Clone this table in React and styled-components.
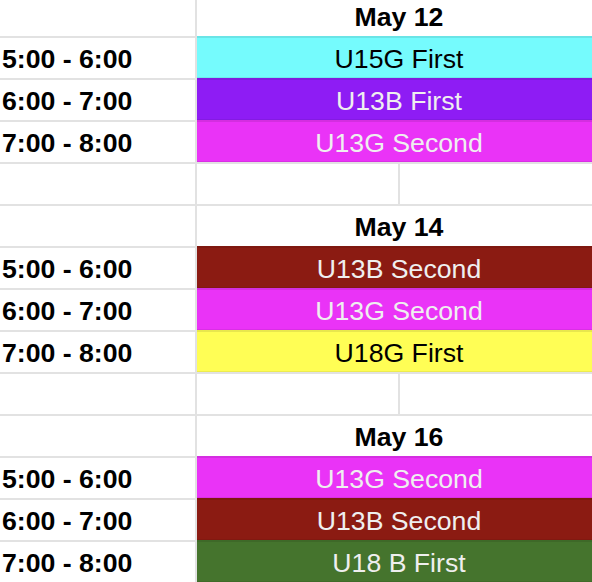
import React from "react";
import styled, { createGlobalStyle } from "styled-components";

const Global = createGlobalStyle`
  html, body { margin: 0; padding: 0; background: #fff; overflow: hidden; }
  body { font-family: "Liberation Sans", Arial, sans-serif; }
`;

const LINE = "#e2e2e2";

const Sheet = styled.div`
  width: 601px;
  display: flex;
  flex-direction: column;
`;

const Row = styled.div`
  display: grid;
  grid-template-columns: 197px 203px 1fr;
  height: ${(p) => (p.$first ? "36px" : "42px")};
  font-size: 26.67px;
  line-height: normal;
`;

const Cell = styled.div`
  box-sizing: border-box;
  display: flex;
  align-items: flex-end;
  padding-bottom: 3px;
  border-top: ${(p) => (p.$first ? "none" : `2px solid ${LINE}`)};
  min-width: 0;
  white-space: nowrap;
  overflow: hidden;
`;

const TimeCell = styled(Cell)`
  border-right: 2px solid ${LINE};
  padding-left: 2px;
  font-weight: bold;
  color: #000;
`;

const SplitCell = styled(Cell)`
  border-right: ${(p) => (p.$divider ? `2px solid ${LINE}` : "none")};
`;

const HeaderCell = styled(Cell)`
  grid-column: span 2;
  justify-content: center;
  font-weight: bold;
  color: #000;
  padding-bottom: 3px;
`;

const SlotCell = styled(Cell)`
  grid-column: span 2;
  justify-content: center;
  background: ${(p) => p.$bg};
  color: ${(p) => p.$fg};
  border-top: 2px solid rgba(0, 0, 0, 0.09);
  box-shadow: inset 0 -1px 0 rgba(0, 0, 0, 0.07);
`;

const DARK = "#efefef";

const schedule = [
  {
    date: "May 12",
    slots: [
      { time: "5:00 - 6:00", team: "U15G First", bg: "#75fbfd", fg: "#000" },
      { time: "6:00 - 7:00", team: "U13B First", bg: "#8e1cf4", fg: DARK },
      { time: "7:00 - 8:00", team: "U13G Second", bg: "#ea33f7", fg: DARK },
    ],
  },
  {
    date: "May 14",
    slots: [
      { time: "5:00 - 6:00", team: "U13B Second", bg: "#8b1b12", fg: DARK },
      { time: "6:00 - 7:00", team: "U13G Second", bg: "#ea33f7", fg: DARK },
      { time: "7:00 - 8:00", team: "U18G First", bg: "#fffe55", fg: "#000" },
    ],
  },
  {
    date: "May 16",
    slots: [
      { time: "5:00 - 6:00", team: "U13G Second", bg: "#ea33f7", fg: DARK },
      { time: "6:00 - 7:00", team: "U13B Second", bg: "#8b1b12", fg: DARK },
      { time: "7:00 - 8:00", team: "U18 B First", bg: "#45742d", fg: DARK },
    ],
  },
];

export default function App() {
  return (
    <>
      <Global />
      <Sheet>
        {schedule.map((day, i) => {
          const first = i === 0;
          return (
            <React.Fragment key={day.date}>
              {!first && (
                <Row>
                  <TimeCell />
                  <SplitCell $divider />
                  <SplitCell />
                </Row>
              )}
              <Row $first={first}>
                <TimeCell $first={first} />
                <HeaderCell $first={first}>{day.date}</HeaderCell>
              </Row>
              {day.slots.map((s) => (
                <Row key={s.time}>
                  <TimeCell>{s.time}</TimeCell>
                  <SlotCell $bg={s.bg} $fg={s.fg}>
                    {s.team}
                  </SlotCell>
                </Row>
              ))}
            </React.Fragment>
          );
        })}
      </Sheet>
    </>
  );
}
